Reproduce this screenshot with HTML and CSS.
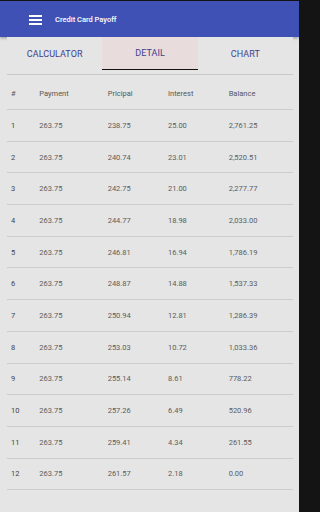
FILE: index.html
```html
<!DOCTYPE html>
<html>
<head>
<meta charset="utf-8">
<link rel="stylesheet" href="styles.css">
</head>
<body>
<div class="app">
  <header class="appbar">
    <svg class="menu" width="13" height="10" viewBox="0 0 13 10"><rect x="0" y="0" width="13" height="2" fill="#fff"/><rect x="0" y="4" width="13" height="2" fill="#fff"/><rect x="0" y="8" width="13" height="2" fill="#fff"/></svg>
    <span class="title">Credit Card Payoff</span>
  </header>
  <nav class="tabs">
    <div class="tab">CALCULATOR</div>
    <div class="tab active">DETAIL</div>
    <div class="tab">CHART</div>
  </nav>
  <div class="table">
    <div class="row head"><span>#</span><span>Payment</span><span>Pricipal</span><span>Interest</span><span>Balance</span></div>
    <div class="row"><span class="n">1</span><span>263.75</span><span>238.75</span><span>25.00</span><span>2,761.25</span></div>
    <div class="row"><span class="n">2</span><span>263.75</span><span>240.74</span><span>23.01</span><span>2,520.51</span></div>
    <div class="row"><span class="n">3</span><span>263.75</span><span>242.75</span><span>21.00</span><span>2,277.77</span></div>
    <div class="row"><span class="n">4</span><span>263.75</span><span>244.77</span><span>18.98</span><span>2,033.00</span></div>
    <div class="row"><span class="n">5</span><span>263.75</span><span>246.81</span><span>16.94</span><span>1,786.19</span></div>
    <div class="row"><span class="n">6</span><span>263.75</span><span>248.87</span><span>14.88</span><span>1,537.33</span></div>
    <div class="row"><span class="n">7</span><span>263.75</span><span>250.94</span><span>12.81</span><span>1,286.39</span></div>
    <div class="row"><span class="n">8</span><span>263.75</span><span>253.03</span><span>10.72</span><span>1,033.36</span></div>
    <div class="row"><span class="n">9</span><span>263.75</span><span>255.14</span><span>8.61</span><span>778.22</span></div>
    <div class="row"><span class="n">10</span><span>263.75</span><span>257.26</span><span>6.49</span><span>520.96</span></div>
    <div class="row"><span class="n">11</span><span>263.75</span><span>259.41</span><span>4.34</span><span>261.55</span></div>
    <div class="row"><span class="n">12</span><span>263.75</span><span>261.57</span><span>2.18</span><span>0.00</span></div>
  </div>
</div>
</body>
</html>
```
FILE: styles.css
```css
html, body {
  margin: 0;
  padding: 0;
  background: #141414;
}
body {
  font-family: Roboto, "Liberation Sans", sans-serif;
}
.app {
  width: 299px;
  height: 511px;
  margin-top: 1px;
  background: #e5e5e5;
  overflow: hidden;
}
.appbar {
  height: 36px;
  background: #3f51b5;
  display: flex;
  align-items: center;
  padding-left: 29px;
  box-shadow: 0 1px 3px rgba(0,0,0,0.35);
  position: relative;
  z-index: 1;
}
.menu {
  display: block;
  margin-top: 1px;
}
.title {
  margin-left: 13px;
  color: #fff;
  font-size: 7.5px;
  font-weight: 500;
  margin-top: 0px;
}
.tabs {
  margin: 0 6px 0 7px;
  display: flex;
  height: 33px;
  background: #e5e5e5;
  position: relative;
  z-index: 2;
  border-bottom: 1px solid #c9c9c9;
  padding-bottom: 4px;
}
.tab {
  flex: 1;
  display: flex;
  align-items: center;
  justify-content: center;
  font-size: 9px;
  color: #3d418f;
  letter-spacing: 0.05px;
}
.tab.active {
  background: #e8dcdc;
  border-bottom: 1.5px solid #111;
  box-sizing: border-box;
}
.table {
  margin: 0 6px 0 7px;
}
.row {
  display: grid;
  grid-template-columns: 28.3px 68.4px 60.3px 60.7px 1fr;
  padding-left: 4px;
  height: 30.7px;
  align-items: center;
  border-bottom: 1px solid #cdcdcd;
  font-size: 7.5px;
  color: #5c5c5c;
}
.row.head {
  height: 34px;
  padding-top: 2px;
  box-sizing: border-box;
  height: 35px;
  color: #575757;
}
.row .n {
  color: #444;
}
```
